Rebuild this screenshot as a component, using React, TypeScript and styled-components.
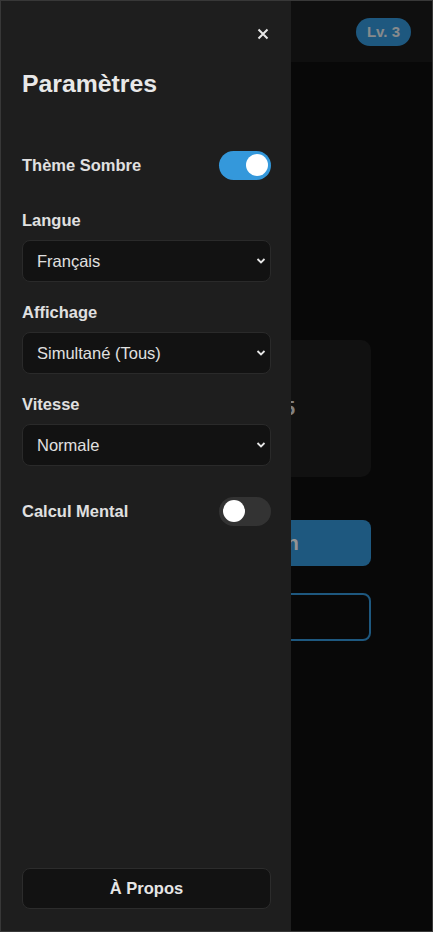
import styled, { createGlobalStyle } from "styled-components";

const GlobalStyle = createGlobalStyle`
  html, body {
    margin: 0;
    padding: 0;
    background: #0a0a0a;
    font-family: "Liberation Sans", Arial, sans-serif;
  }
  * {
    box-sizing: border-box;
  }
`;

const Frame = styled.div`
  position: relative;
  width: 433px;
  height: 932px;
  border: 1px solid #383838;
  background: #0f0f0f;
  overflow: hidden;
`;

const Header = styled.header`
  height: 61px;
  background: #1a1a1a;
  display: flex;
  align-items: center;
  justify-content: flex-end;
  padding-right: 21px;
`;

const Badge = styled.span`
  height: 28px;
  padding: 0 11px;
  border-radius: 14px;
  background: #3498db;
  color: #e8eef2;
  font-weight: 700;
  font-size: 15px;
  display: flex;
  align-items: center;
`;

const Main = styled.main`
  padding: 278px 61px 0 60px;
  display: flex;
  flex-direction: column;
`;

const Card = styled.div`
  height: 137px;
  background: #1e1e1e;
  border-radius: 10px;
  display: grid;
  grid-template-columns: 1fr 1fr;
  align-items: center;
  margin-bottom: 43px;
`;

const StatValue = styled.span`
  text-align: center;
  font-size: 20px;
  font-weight: 700;
  padding-right: 8px;
  color: #e0e0e0;
`;

const ActionButton = styled.button<{ $outline?: boolean }>`
  height: ${(p) => (p.$outline ? "48px" : "46px")};
  border-radius: 8px;
  font-family: inherit;
  font-weight: 700;
  font-size: 20px;
  color: ${(p) => (p.$outline ? "#3498db" : "#fff")};
  background: ${(p) => (p.$outline ? "transparent" : "#3498db")};
  border: ${(p) => (p.$outline ? "2px solid #3498db" : "none")};
  margin-bottom: 27px;
`;

const Overlay = styled.div`
  position: absolute;
  inset: 0;
  background: rgba(0, 0, 0, 0.42);
`;

const Drawer = styled.aside`
  position: absolute;
  top: 0;
  left: 0;
  bottom: 0;
  width: 290px;
  background: #1e1e1e;
  display: flex;
  flex-direction: column;
  padding: 18px 20px 22px 21px;
  color: #e0e0e0;
`;

const CloseButton = styled.button`
  align-self: flex-end;
  width: 16px;
  height: 30px;
  padding: 0;
  border: none;
  background: none;
  color: #e6e6e6;
  display: flex;
  align-items: center;
  justify-content: center;
  cursor: pointer;
`;

const Title = styled.h2`
  margin: 20px 0 41px;
  font-size: 24.8px;
  line-height: 30px;
  font-weight: 700;
  color: #e8e8e8;
`;

const ToggleRow = styled.div`
  display: flex;
  align-items: center;
  justify-content: space-between;
  padding: 10px 0;
  height: 50px;
  margin-bottom: 20px;
`;

const RowLabel = styled.span`
  font-size: 16.5px;
  font-weight: 700;
`;

const Switch = styled.span<{ $on?: boolean }>`
  position: relative;
  width: 52px;
  height: 29px;
  border-radius: 15px;
  background: ${(p) => (p.$on ? "#3498db" : "#333")};

  &::after {
    content: "";
    position: absolute;
    top: 3.5px;
    left: ${(p) => (p.$on ? "27px" : "4px")};
    width: 22px;
    height: 22px;
    border-radius: 50%;
    background: #fff;
  }
`;

const Group = styled.div`
  display: flex;
  flex-direction: column;
  margin-bottom: 20px;
`;

const GroupLabel = styled.label`
  font-size: 16.5px;
  line-height: 20px;
  font-weight: 700;
  margin-bottom: 10px;
`;

const SelectWrap = styled.div`
  position: relative;
  height: 42px;

  svg {
    position: absolute;
    right: 5px;
    top: 17px;
    pointer-events: none;
  }
`;

const Select = styled.select`
  appearance: none;
  width: 100%;
  height: 100%;
  padding: 0 30px 0 14px;
  border: 1px solid #2a2a2a;
  border-radius: 8px;
  background: #121212;
  color: #e0e0e0;
  font-family: inherit;
  font-size: 16.5px;
  outline: none;
`;

const Spacer = styled.div`
  flex: 1;
`;

const AboutButton = styled.button`
  height: 41px;
  border: 1px solid #2c2c2c;
  border-radius: 8px;
  background: #121212;
  color: #e6e6e6;
  font-family: inherit;
  font-size: 16.5px;
  font-weight: 700;
`;

const Chevron = () => (
  <svg width="10" height="8" viewBox="0 0 10 8">
    <path d="M1.5 2 L5 5.5 L8.5 2" fill="none" stroke="#e6e6e6" strokeWidth="1.8" />
  </svg>
);

const selects = [
  { label: "Langue", value: "Français", options: ["Français", "English"] },
  {
    label: "Affichage",
    value: "Simultané (Tous)",
    options: ["Simultané (Tous)", "Séquentiel"],
  },
  { label: "Vitesse", value: "Normale", options: ["Lente", "Normale", "Rapide"] },
];

export default function App() {
  return (
    <>
      <GlobalStyle />
      <Frame>
        <Header>
          <Badge>Lv. 3</Badge>
        </Header>
        <Main>
          <Card>
            <StatValue>3</StatValue>
            <StatValue>5</StatValue>
          </Card>
          <ActionButton>Nouvelle Session</ActionButton>
          <ActionButton $outline>Historique</ActionButton>
        </Main>
        <Overlay />
        <Drawer>
          <CloseButton aria-label="Fermer">
            <svg width="12" height="12" viewBox="0 0 12 12">
              <path d="M1.5 1.5 L10.5 10.5 M10.5 1.5 L1.5 10.5" stroke="currentColor" strokeWidth="2" />
            </svg>
          </CloseButton>
          <Title>Paramètres</Title>
          <ToggleRow>
            <RowLabel>Thème Sombre</RowLabel>
            <Switch $on />
          </ToggleRow>
          {selects.map((s) => (
            <Group key={s.label}>
              <GroupLabel>{s.label}</GroupLabel>
              <SelectWrap>
                <Select defaultValue={s.value}>
                  {s.options.map((o) => (
                    <option key={o}>{o}</option>
                  ))}
                </Select>
                <Chevron />
              </SelectWrap>
            </Group>
          ))}
          <ToggleRow>
            <RowLabel>Calcul Mental</RowLabel>
            <Switch />
          </ToggleRow>
          <Spacer />
          <AboutButton>À Propos</AboutButton>
        </Drawer>
      </Frame>
    </>
  );
}
